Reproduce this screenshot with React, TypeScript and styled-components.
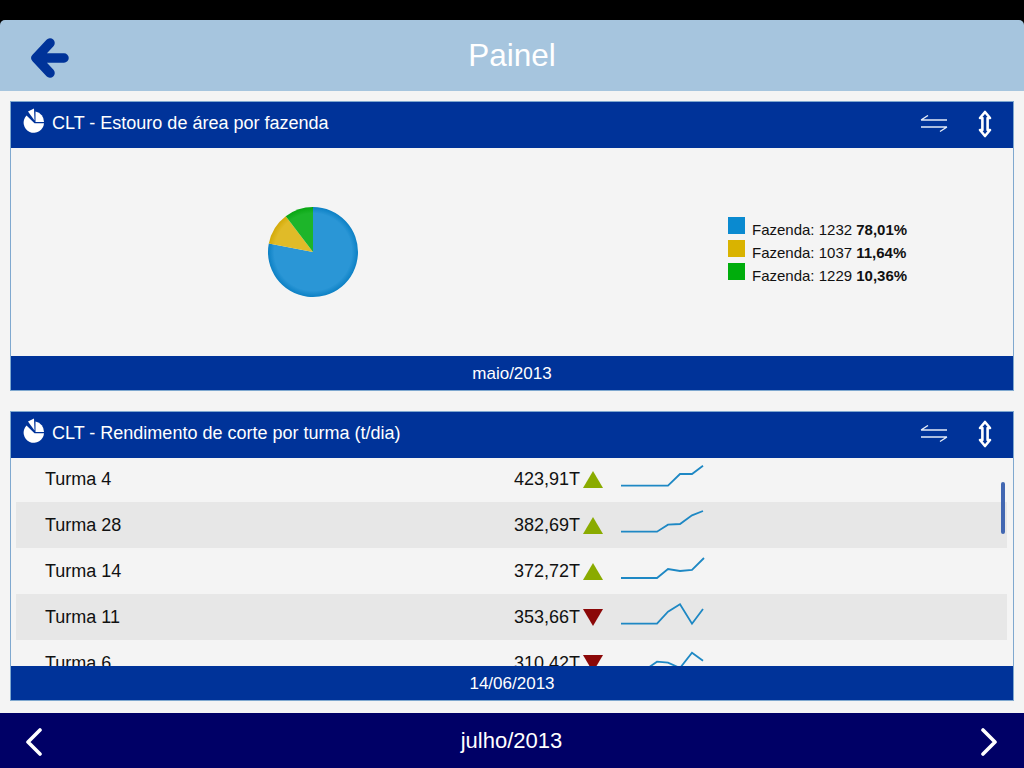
import styled, { createGlobalStyle } from "styled-components";

const GlobalStyle = createGlobalStyle`
  html, body {
    margin: 0;
    padding: 0;
    background: #000;
  }
  body {
    font-family: "Liberation Sans", Arial, sans-serif;
  }
`;

const Screen = styled.div`
  width: 1024px;
  height: 768px;
  display: flex;
  flex-direction: column;
  overflow: hidden;
  background: #000;
`;

const StatusBar = styled.div`
  height: 20px;
  flex: none;
  background: #000;
`;

const Header = styled.header`
  height: 71px;
  flex: none;
  display: grid;
  grid-template-columns: 1fr auto 1fr;
  align-items: center;
  padding: 0 30px;
  background: #a6c5de;
  border-radius: 5px 5px 0 0;
`;

const Title = styled.h1`
  margin: 0;
  font-size: 31.5px;
  font-weight: 400;
  color: #fff;
`;

const BackButton = styled.div`
  display: flex;
  align-items: center;
  padding-top: 4px;
`;

const Main = styled.main`
  flex: 1;
  display: flex;
  flex-direction: column;
  gap: 20px;
  padding: 10px 10px 12px;
  background: #f4f4f4;
`;

const Panel = styled.section`
  height: 290px;
  box-sizing: border-box;
  display: flex;
  flex-direction: column;
  position: relative;
  border: 1px solid #7fa8cf;
  background: #f4f4f4;
`;

const PanelHeader = styled.div`
  height: 46px;
  flex: none;
  display: flex;
  align-items: center;
  padding: 0 21px 0 12px;
  background: #003399;
  color: #fff;
`;

const PanelIcon = styled.svg`
  flex: none;
  margin-bottom: 8px;
`;

const PanelTitle = styled.span`
  flex: 1;
  margin-left: 7px;
  padding-bottom: 4px;
  font-size: 18px;
`;

const HeaderTools = styled.div`
  display: flex;
  align-items: center;
  gap: 30px;
  padding-bottom: 2px;
`;

const PanelFooter = styled.div`
  height: 34px;
  box-sizing: border-box;
  flex: none;
  display: flex;
  align-items: center;
  justify-content: center;
  padding-top: 2px;
  background: #003399;
  color: #fff;
  font-size: 17px;
  position: relative;
`;

const ChartBody = styled.div`
  flex: 1;
  display: flex;
  align-items: center;
  padding-left: 256px;
`;

const Legend = styled.ul`
  list-style: none;
  margin: 0 0 8px 369px;
  padding: 0;
  display: flex;
  flex-direction: column;
  gap: 6px;
`;

const LegendRow = styled.li`
  height: 17px;
  display: flex;
  align-items: flex-start;
  gap: 7px;
  font-size: 15px;
  color: #111;
`;

const Swatch = styled.span<{ $color: string }>`
  width: 17px;
  height: 17px;
  flex: none;
  background: ${(p) => p.$color};
`;

const LegendText = styled.span`
  margin-top: 4px;
  line-height: 17px;

  b {
    font-weight: 700;
  }
`;

const TableBody = styled.div`
  flex: 1;
  min-height: 0;
  overflow: hidden;
  padding: 0 6px 0 5px;
  margin-top: -2px;
`;

const Row = styled.div<{ $alt: boolean }>`
  height: 46px;
  display: flex;
  align-items: center;
  padding: 0 301px 0 29px;
  font-size: 18px;
  color: #111;
  background: ${(p) => (p.$alt ? "#e7e7e7" : "transparent")};
`;

const RowName = styled.span`
  flex: 1;
`;

const RowValue = styled.span`
  margin-right: 3px;
`;

const Trend = styled.span<{ $up: boolean }>`
  width: 0;
  height: 0;
  margin-top: 1px;
  margin-right: 17px;
  border-left: 10px solid transparent;
  border-right: 10px solid transparent;
  ${(p) =>
    p.$up
      ? "border-bottom: 17px solid #8aab00;"
      : "border-top: 17px solid #8b0808;"}
`;

const ScrollThumb = styled.div`
  position: absolute;
  top: 70px;
  right: 8px;
  width: 4px;
  height: 52px;
  border-radius: 2px;
  background: #4267b2;
`;

const BottomBar = styled.footer`
  height: 55px;
  flex: none;
  display: flex;
  align-items: center;
  justify-content: space-between;
  padding: 0 27px 0 26px;
  background: #000066;
  color: #fff;
  font-size: 22px;
`;

const ChevronIcon = styled.svg`
  margin-top: 3px;
`;

function PieIcon() {
  return (
    <PanelIcon width="22" height="26" viewBox="0 0 22 26" fill="#fff">
      <path d="M11.5 15.2L21 15.2A10.2 10.2 0 1 1 3.5 7.5Z" />
      <path d="M5 3.5L11 0.5L11.5 12.5Z" />
      <path d="M12.5 3.5A10.2 10.2 0 0 1 21 14L12.5 14Z" />
    </PanelIcon>
  );
}

function SwapIcon() {
  return (
    <svg width="28" height="18" viewBox="0 0 28 18" fill="none" stroke="#e4ecf8" strokeWidth="1.4">
      <path d="M1 5H27M1 5L8 0.5" />
      <path d="M1 12H27M27 12L20 16.5" />
    </svg>
  );
}

function ExpandIcon() {
  return (
    <svg width="14" height="28" viewBox="0 0 14 28" fill="none" stroke="#fff" strokeWidth="2.6" strokeLinejoin="round">
      <path d="M7 2L12 8H9.6V20H12L7 26L2 20H4.4V8H2Z" />
    </svg>
  );
}

function Chevron({ right }: { right?: boolean }) {
  return (
    <ChevronIcon width="16" height="28" viewBox="0 0 16 28" fill="none" stroke="#fff" strokeWidth="3.6" strokeLinecap="round" strokeLinejoin="round">
      <path d={right ? "M2 2L14 14L2 26" : "M14 2L2 14L14 26"} />
    </ChevronIcon>
  );
}

function slice(r: number, from: number, to: number) {
  const pt = (pct: number) => {
    const a = (pct / 100) * 2 * Math.PI;
    return `${(46 + r * Math.sin(a)).toFixed(2)} ${(46 - r * Math.cos(a)).toFixed(2)}`;
  };
  const large = to - from > 50 ? 1 : 0;
  return `M46 46L${pt(from)}A${r} ${r} 0 ${large} 1 ${pt(to)}Z`;
}

function PieGradient({ id, inner, outer }: { id: string; inner: string; outer: string }) {
  return (
    <radialGradient id={id} gradientUnits="userSpaceOnUse" cx="46" cy="46" r="45">
      <stop offset="86%" stopColor={inner} />
      <stop offset="100%" stopColor={outer} />
    </radialGradient>
  );
}

function PieChart() {
  return (
    <svg width="92" height="92" viewBox="0 0 92 92">
      <defs>
        <PieGradient id="blueFill" inner="#2a96d6" outer="#0c80c4" />
        <PieGradient id="yellowFill" inner="#e0bb28" outer="#d3aa08" />
        <PieGradient id="greenFill" inner="#1db52a" outer="#08a612" />
      </defs>
      <path d={slice(45, 0, 78.01)} fill="url(#blueFill)" />
      <path d={slice(45, 78.01, 89.65)} fill="url(#yellowFill)" />
      <path d={slice(45, 89.65, 100)} fill="url(#greenFill)" />
    </svg>
  );
}

function Sparkline({ points }: { points: string }) {
  return (
    <svg width="86" height="30" viewBox="0 0 86 30" fill="none" stroke="#1e88c4" strokeWidth="1.8">
      <polyline points={points} />
    </svg>
  );
}

const legend = [
  { color: "#0a8ad0", name: "Fazenda: 1232", pct: "78,01%" },
  { color: "#d9b300", name: "Fazenda: 1037", pct: "11,64%" },
  { color: "#00ad0c", name: "Fazenda: 1229", pct: "10,36%" },
];

const rows = [
  { name: "Turma 4", value: "423,91T", up: true, spark: "1,21.7 48,21.7 60,10 72,10 83,1.7" },
  { name: "Turma 28", value: "382,69T", up: true, spark: "1,21.7 37,21.7 48,14.7 60,14 72,5.3 83,1" },
  { name: "Turma 14", value: "372,72T", up: true, spark: "1,22 37,22 48,13 60,15 72,14 84,2" },
  { name: "Turma 11", value: "353,66T", up: false, spark: "1,21.7 37,21.7 48,9.7 60,2.3 72,21.7 83,7" },
  { name: "Turma 6", value: "310,42T", up: false, spark: "1,22 25,22 37,13.7 48,14.7 60,20 72,4.7 83,12.7" },
];

export default function App() {
  return (
    <Screen>
      <GlobalStyle />
      <StatusBar />
      <Header>
        <BackButton>
          <svg width="40" height="42" viewBox="0 0 40 42" fill="none" stroke="#003399" strokeWidth="9.5" strokeLinecap="round" strokeLinejoin="round">
            <path d="M34 21H6M20 6L6 21L20 36" />
          </svg>
        </BackButton>
        <Title>Painel</Title>
      </Header>
      <Main>
        <Panel>
          <PanelHeader>
            <PieIcon />
            <PanelTitle>CLT - Estouro de área por fazenda</PanelTitle>
            <HeaderTools>
              <SwapIcon />
              <ExpandIcon />
            </HeaderTools>
          </PanelHeader>
          <ChartBody>
            <PieChart />
            <Legend>
              {legend.map((l) => (
                <LegendRow key={l.name}>
                  <Swatch $color={l.color} />
                  <LegendText>
                    {l.name} <b>{l.pct}</b>
                  </LegendText>
                </LegendRow>
              ))}
            </Legend>
          </ChartBody>
          <PanelFooter>maio/2013</PanelFooter>
        </Panel>
        <Panel>
          <PanelHeader>
            <PieIcon />
            <PanelTitle>CLT - Rendimento de corte por turma (t/dia)</PanelTitle>
            <HeaderTools>
              <SwapIcon />
              <ExpandIcon />
            </HeaderTools>
          </PanelHeader>
          <TableBody>
            {rows.map((r, i) => (
              <Row key={r.name} $alt={i % 2 === 1}>
                <RowName>{r.name}</RowName>
                <RowValue>{r.value}</RowValue>
                <Trend $up={r.up} />
                <Sparkline points={r.spark} />
              </Row>
            ))}
          </TableBody>
          <ScrollThumb />
          <PanelFooter>14/06/2013</PanelFooter>
        </Panel>
      </Main>
      <BottomBar>
        <Chevron />
        julho/2013
        <Chevron right />
      </BottomBar>
    </Screen>
  );
}
